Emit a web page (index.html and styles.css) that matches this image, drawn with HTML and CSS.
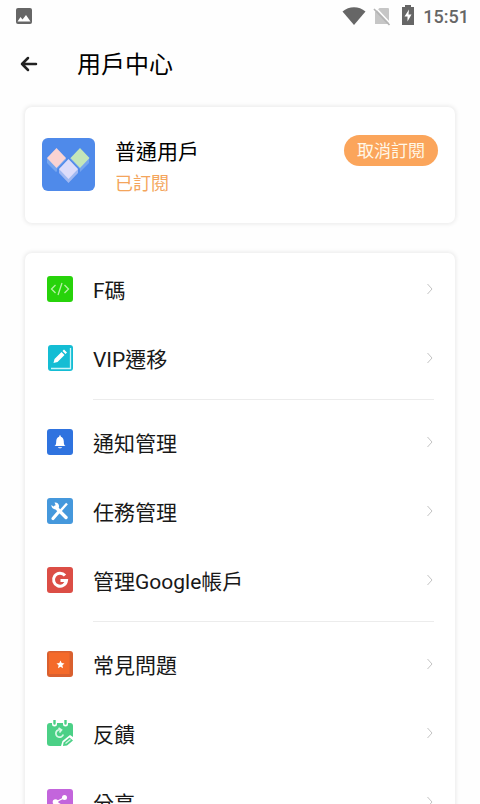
FILE: index.html
```html
<!DOCTYPE html>
<html lang="zh-Hant">
<head>
<meta charset="utf-8">
<meta name="viewport" content="width=device-width, initial-scale=1">
<title>用戶中心</title>
<link rel="stylesheet" href="styles.css">
</head>
<body>
<div class="app">
  <div class="status">
    <svg class="status-photo" width="18" height="18" viewBox="0 0 18 18" aria-hidden="true"><rect x="1" y="1" width="16" height="16" rx="2" fill="#666"/><path d="M2.500 14.500 5.500 10l2 2.500L11 8l4.500 6.500z" fill="#fff"/></svg>
    <svg width="24" height="20" viewBox="0 0 24 20" aria-hidden="true"><path d="M.5 5.500C7-.2 17-.2 23.500 5.500L12 19z" fill="#666"/></svg>
    <svg class="status-sim" width="18" height="20" viewBox="0 0 18 20" aria-hidden="true"><path d="M6.500 2H15a1 1 0 0 1 1 1v15H2V6z" fill="#c6c6c6"/><path d="M2 1l15 16" stroke="#fff" stroke-width="1.500"/><path d="M1 3l15.500 16" stroke="#b4b4b4" stroke-width="1.700"/></svg>
    <svg class="status-battery" width="12" height="20" viewBox="0 0 12 20" aria-hidden="true"><path d="M0 2h3V0h6v2h3v18H0z" fill="#666"/><path d="M7 4.500 2.500 11.500H5.500V16.500L9.500 9.500H6.500z" fill="#fff"/></svg>
    <span class="time">15:51</span>
  </div>
  <header class="topbar">
    <button class="back" type="button" aria-label="返回"><svg width="18" height="16" viewBox="0 0 18 16"><path d="M16 8H2M8 2 2 8l6 6" fill="none" stroke="#222" stroke-width="2.500" stroke-linecap="round" stroke-linejoin="round"/></svg></button>
    <h1>用戶中心</h1>
  </header>
  <main>
    <section class="card profile">
      <svg class="avatar" width="53" height="53" viewBox="0 0 53 53" aria-hidden="true">
        <rect width="53" height="53" rx="6" fill="#4f8aea"/>
        <path d="M5 20v5l9 9 10-9v-5zM28 20v5l10 9 9-9v-5z" fill="#76a5ee"/>
        <path d="M5 20 14.500 10 24 20l-9.500 10z" fill="#fad3d2"/>
        <path d="M28.500 20 38 10l9.500 10L38 30z" fill="#c4e6b9"/>
        <path d="M15 31 26.500 19 38 31v3L26.500 46 15 34z" fill="#4f8aea"/>
        <path d="M17 31v4l9.500 10 9.500-10v-4z" fill="#9fb8f2"/>
        <path d="M17 31l9.500-10L36 31l-9.500 10z" fill="#dcdcfa"/>
      </svg>
      <div class="who">
        <div class="name">普通用戶</div>
        <div class="state">已訂閱</div>
      </div>
      <button class="cancel" type="button">取消訂閱</button>
    </section>
    <nav class="card menu">
      <ul>
        <li><a href="#"><svg class="icon" viewBox="0 0 26 26"><rect width="26" height="26" rx="3" fill="#27d30b"/><path d="M8.500 9 4.500 13l4 4M17.500 9l4 4-4 4M15 7l-4 12" fill="none" stroke="#b5f2a5" stroke-width="1.300"/></svg><span>F碼</span><svg class="chev" viewBox="0 0 8 12"><path d="M1.500 1 6 6l-4.500 5"/></svg></a></li>
        <li><a href="#"><svg class="icon" viewBox="0 0 26 26"><rect x="1" width="25" height="26" rx="3" fill="#14bdd4"/><path d="M23.500 3v20.500H4" fill="none" stroke="#c9f5f9" stroke-width="1.300"/><path d="M6.500 18l1-4 7-7 3 3-7 7zM15.500 6l1.500-1.500 3 3L18.500 9z" fill="#fff"/></svg><span>VIP遷移</span><svg class="chev" viewBox="0 0 8 12"><path d="M1.500 1 6 6l-4.500 5"/></svg></a></li>
      </ul>
      <hr>
      <ul>
        <li><a href="#"><svg class="icon" viewBox="0 0 26 26"><rect width="26" height="26" rx="3" fill="#2f73df"/><path d="M7.500 17c1.500-1 1.700-2.500 1.700-4.500 0-2.700 1.300-4.300 3-4.700V6.500h1.600v1.300c1.700.4 3 2 3 4.700 0 2 .2 3.500 1.700 4.500zM11 18.200h4c0 1.500-4 1.500-4 0z" fill="#fff"/></svg><span>通知管理</span><svg class="chev" viewBox="0 0 8 12"><path d="M1.500 1 6 6l-4.500 5"/></svg></a></li>
        <li><a href="#"><svg class="icon" viewBox="0 0 26 26"><rect width="26" height="26" rx="3" fill="#4598dc"/><path d="M20 5.500 12 14.500" stroke="#fff" stroke-width="2.400"/><path d="M12 13.500 6 20.500" stroke="#fff" stroke-width="3.200" stroke-linecap="round"/><path d="M8.500 9 19 19.500" stroke="#fff" stroke-width="3.400" stroke-linecap="round"/><path d="M4.300 7 7 8.800 8.800 7.500 7.500 4.500c3-.5 5.300 2 4.300 5C10 12.500 4.500 12 4.300 7z" fill="#fff"/></svg><span>任務管理</span><svg class="chev" viewBox="0 0 8 12"><path d="M1.500 1 6 6l-4.500 5"/></svg></a></li>
        <li><a href="#"><svg class="icon" viewBox="0 0 26 26"><rect width="26" height="26" rx="3" fill="#dc4e46"/><path d="M18 8.500A6.500 6.500 0 1 0 19.500 13.500H13.500" fill="none" stroke="#fff" stroke-width="3"/></svg><span>管理Google帳戶</span><svg class="chev" viewBox="0 0 8 12"><path d="M1.500 1 6 6l-4.500 5"/></svg></a></li>
      </ul>
      <hr>
      <ul>
        <li><a href="#"><svg class="icon" viewBox="0 0 26 26"><rect width="26" height="26" rx="3" fill="#d9602f"/><path d="M2 1.500h20.500V23H2z" fill="#f46a2a"/><path d="M13.500 9.500l1.200 2.600 2.800.3-2.100 1.900.6 2.900-2.500-1.500-2.500 1.500.6-2.900-2.100-1.900 2.800-.3z" fill="#fff"/></svg><span>常見問題</span><svg class="chev" viewBox="0 0 8 12"><path d="M1.500 1 6 6l-4.500 5"/></svg></a></li>
        <li><a href="#"><svg class="icon" viewBox="0 0 26 26"><path d="M3 3h20a3 3 0 0 1 3 3v17a3 3 0 0 1-3 3H3a3 3 0 0 1-3-3V6a3 3 0 0 1 3-3z" fill="#4bd086"/><path d="M5 0h5v4a2.500 2.500 0 0 1-5 0zM16 0h5v4a2.500 2.500 0 0 1-5 0z" fill="#fff"/><path d="M6.300 0h2.400v3.500a1.200 1.200 0 0 1-2.400 0zM17.300 0h2.400v3.500a1.200 1.200 0 0 1-2.400 0z" fill="#4bd086"/><path d="M14 9.800a3.800 3.800 0 1 0 2.300 4.700M11.500 8l3 2-2 2.500" fill="none" stroke="#d8f8e6" stroke-width="1.700"/><path d="M14 26l1.500-5L23 15l3 2v9z" fill="#fff"/><path d="M16.500 22.500l6-5 3.500 3-6 5-4 .5z" fill="#4bd086"/><path d="M18.500 23.500l5-4" stroke="#d8f8e6" stroke-width="1.200"/></svg><span>反饋</span><svg class="chev" viewBox="0 0 8 12"><path d="M1.500 1 6 6l-4.500 5"/></svg></a></li>
        <li><a href="#"><svg class="icon" viewBox="0 0 26 26"><rect width="26" height="26" rx="3" fill="#c365dc"/><path d="M17.500 8.500 9 13l8.500 5" fill="none" stroke="#fff" stroke-width="1.400"/><g fill="#fff"><circle cx="17.500" cy="8.500" r="2.500"/><circle cx="8.500" cy="13" r="2.800"/><circle cx="17.500" cy="18" r="2.500"/></g></svg><span>分享</span><svg class="chev" viewBox="0 0 8 12"><path d="M1.500 1 6 6l-4.500 5"/></svg></a></li>
      </ul>
    </nav>
  </main>
</div>
</body>
</html>
```
FILE: styles.css
```css
* { box-sizing: border-box; }
body {
  margin: 0;
  background: #fefefe;
  color: #111;
  font-family: Roboto, "Noto Sans CJK TC", sans-serif;
}
.app {
  height: 100vh;
  overflow: hidden;
}
.status {
  display: flex;
  align-items: center;
  height: 32px;
  padding: 0 11px 0 15px;
}
.status-photo { margin-right: auto; }
.status-sim { margin-left: 7px; }
.status-battery { margin: 0 9px 2px 11px; }
.time {
  padding-top: 2px;
  font-size: 18px;
  font-weight: 500;
  line-height: 32px;
  color: #666;
}
.topbar {
  display: flex;
  align-items: center;
  height: 64px;
  padding: 0 20px;
}
.back {
  display: flex;
  width: 57px;
  padding: 0;
  border: 0;
  background: none;
}
h1 {
  margin: 0;
  padding-top: 2px;
  font-size: 24px;
  font-weight: 400;
  line-height: 32px;
  color: #000;
}
main {
  display: flex;
  flex-direction: column;
  gap: 30px;
  padding: 11px 25px 0;
}
.card {
  border-radius: 7px;
  background: #fff;
  box-shadow: 0 0 4px 1px #e9e9e9;
}
.profile {
  display: flex;
  align-items: flex-start;
  padding: 28px 17px 23px;
}
.avatar { margin-top: 3px; }
.who {
  flex: 1;
  margin-left: 20px;
  padding-top: 1px;
}
.name {
  font-size: 21px;
  line-height: 32px;
  color: #000;
}
.state {
  font-size: 18px;
  line-height: 32px;
  color: #f4a55c;
}
.cancel {
  height: 31px;
  padding: 2px 13px 0;
  border: 0;
  border-radius: 16px;
  background: #fba55b;
  color: #fff8e8;
  font-family: inherit;
  font-size: 17px;
  line-height: 29px;
}
.menu { padding: 1px 21px 0 22px; }
ul {
  margin: 0;
  padding: 0;
  list-style: none;
}
.menu a {
  display: flex;
  align-items: center;
  height: 69px;
  color: #181818;
  font-size: 21px;
  line-height: 32px;
  text-decoration: none;
}
.menu span {
  flex: 1;
  padding-top: 4px;
}
.icon {
  width: 26px;
  height: 26px;
  margin-right: 20px;
}
.chev {
  width: 8px;
  height: 12px;
  fill: none;
  stroke: #c4c4c4;
  stroke-width: 1;
}
hr {
  height: 1px;
  margin: 7px 0 7px 46px;
  border: 0;
  background: #ececec;
}
```
